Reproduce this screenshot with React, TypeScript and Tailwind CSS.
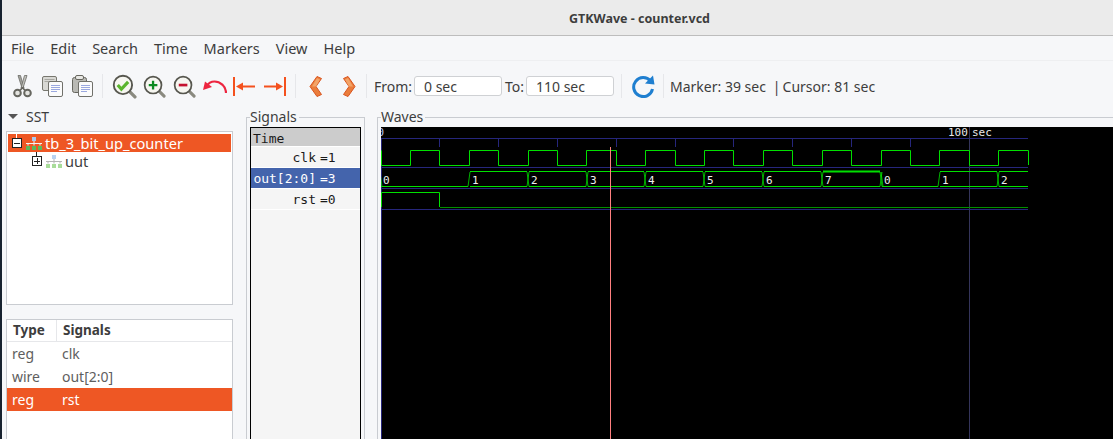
const ui = { fontFamily: '"Noto Sans", sans-serif' };

function Magnifier({ children, size = 23 }: { children: React.ReactNode; size?: number }) {
  return (
    <svg width={size} height={size} viewBox="0 0 24 24">
      <line x1="16" y1="16" x2="22" y2="22" stroke="#8a8a80" strokeWidth="3.2" strokeLinecap="round" />
      <circle cx="10.5" cy="10.5" r="8.8" fill="#f6f6f0" stroke="#56564e" strokeWidth="1.8" />
      {children}
    </svg>
  );
}

function Doc() {
  return (
    <svg width="21" height="22" viewBox="0 0 21 22">
      <rect x="0.500" y="1.500" width="14" height="14" rx="1.500" fill="#d8d8d4" stroke="#77776f" />
      <path d="M2.500 4.500h10M2.500 6.500h10" stroke="#a8a8a2" />
      <rect x="6.500" y="6.500" width="14" height="15" rx="1.500" fill="#fbfbfb" stroke="#70706a" />
      <path d="M9 10.500h9M9 12.500h9M9 14.500h9M9 16.500h6" stroke="#9aa8e0" />
    </svg>
  );
}

function Paste() {
  return (
    <svg width="21" height="22" viewBox="0 0 21 22">
      <rect x="0.500" y="2.500" width="14" height="15" rx="2" fill="#b9b9b4" stroke="#66665f" />
      <rect x="3.500" y="0.500" width="8" height="4" rx="1.500" fill="#e8e8e4" stroke="#66665f" />
      <rect x="6.500" y="6.500" width="14" height="15" rx="1.500" fill="#fbfbfb" stroke="#70706a" />
      <path d="M9 10.500h9M9 12.500h9M9 14.500h9M9 16.500h6" stroke="#9aa8e0" />
    </svg>
  );
}

function Scissors() {
  return (
    <svg width="19" height="23" viewBox="0 0 19 23">
      <path d="M5 0.500L9 13H11L7.500 0.500z" fill="#a6a6a0" stroke="#6a6a64" strokeWidth="0.800" />
      <path d="M14 0.500L10 13H8L11.500 0.500z" fill="#c4c4be" stroke="#6a6a64" strokeWidth="0.800" />
      <circle cx="4.500" cy="18" r="3.300" fill="#e4e4e0" stroke="#66665f" strokeWidth="2" />
      <circle cx="14.500" cy="18" r="3.300" fill="#e4e4e0" stroke="#66665f" strokeWidth="2" />
      <path d="M7 15.500l2.500-3M12 15.500l-2.500-3" stroke="#66665f" strokeWidth="1.800" />
    </svg>
  );
}

function Sep() {
  return <div className="w-px h-[24px] bg-[#e6e7ea]" />;
}

function TreeIcon({ light }: { light?: boolean }) {
  const top = light ? "#b9d2f0" : "#a9c8ee";
  const bottom = light ? "#a9dc9a" : "#5cb85c";
  return (
    <svg width="16" height="13" viewBox="0 0 16 13" className="shrink-0">
      <rect x="6" y="0" width="4" height="4" fill={top} />
      <path d="M8 4v2M0 6.500h16M2 6.500v2M8 6.500v2M14 6.500v2" stroke={light ? "#b5b5b5" : "#f2f2f2"} fill="none" />
      <rect x="0" y="9" width="4" height="4" fill={bottom} />
      <rect x="6" y="9" width="4" height="4" fill={bottom} />
      <rect x="12" y="9" width="4" height="4" fill={bottom} />
    </svg>
  );
}

function Chevron({ flip }: { flip?: boolean }) {
  return (
    <svg width="14" height="21" viewBox="0 0 14 21" style={flip ? { transform: "scaleX(-1)" } : undefined}>
      <path d="M8 0.500L1 10.500L8 20.500L12.500 18.500L7 10.500L12.500 2.500z" fill="#ea7d3c" stroke="#d9541e" strokeLinejoin="round" />
      <path d="M8 2L3 10.500L7 10.500L11 3.500z" fill="#f3a468" />
    </svg>
  );
}

const blue = "#26267c";
const green = "#00e000";
const ticks = [439.5, 498.5, 557.5, 616.5, 675.5, 733.5, 792.5, 851.5, 910.5, 969.5];
const clkEdges = [410.5, 439.5, 469.5, 498.5, 528.5, 557.5, 586.5, 616.5, 645.5, 675.5, 704.5, 733.5, 763.5, 792.5, 822.5, 851.5, 881.5, 910.5, 939.5, 969.5, 998.5];
const outSegs = [
  { x: 381, end: 468, v: "0" },
  { x: 470, end: 527, v: "1" },
  { x: 529, end: 586, v: "2" },
  { x: 588, end: 644, v: "3" },
  { x: 646, end: 703, v: "4" },
  { x: 705, end: 762, v: "5" },
  { x: 764, end: 821, v: "6" },
  { x: 823, end: 880, v: "7" },
  { x: 882, end: 938, v: "0" },
  { x: 940, end: 997, v: "1" },
  { x: 999, end: 1028, v: "2" },
];

function clkPath() {
  let d = "M0.5 150.5V165.5";
  let high = false;
  for (const e of clkEdges) {
    const x = e - 381;
    d += `H${x}V${high ? 165.5 : 150.5}`;
    high = !high;
  }
  return d + "H647.500V165";
}

function Waves() {
  return (
    <svg width="732" height="312" viewBox="0 127 732 312" className="block" style={{ fontFamily: '"DejaVu Sans Mono", monospace' }}>
      <rect x="0" y="127" width="732" height="312" fill="#000" />
      <text x="-3.500" y="136" fontSize="11" fill="#b9c4ee">0</text>
      <text x="567" y="136" fontSize="11" fill="#e8e8e8">100</text>
      <text x="591" y="136" fontSize="11" fill="#e8e8e8">sec</text>
      <path d="M0 138.500H647M0 167.500H647M0 188.500H647M0 209.500H647" stroke={blue} />
      <path d="M0.500 138V439" stroke={blue} />
      {ticks.map((t) => (
        <line key={t} x1={t - 381} x2={t - 381} y1="138" y2="147" stroke={blue} />
      ))}
      <line x1="588.500" x2="588.500" y1="127" y2="439" stroke="#34345a" />
      <path d={clkPath()} fill="none" stroke={green} />
      {outSegs.map((s, i) => {
        const x = s.x - 381;
        const end = s.end - 381;
        const low = s.v === "0";
        return (
          <g key={i}>
            {!low && <line x1={x} x2={end} y1="171.500" y2="171.500" stroke={green} strokeWidth={s.v === "7" ? 2 : 1} />}
            <line x1={x} x2={end} y1="186.500" y2="186.500" stroke={green} />
            {i > 0 && (
              <path
                d={
                  outSegs[i - 1].v === "0"
                    ? `M${x - 2} 186.500L${x} 172`
                    : `M${x - 2} 186.500L${x} 172M${x - 2} 172L${x} 186.500`
                }
                fill="none"
                stroke={green}
                strokeWidth="0.800"
              />
            )}
            {s.v === "0" && (
              <path d={`M${x + 1} 186.500L${x - 1} 172`} fill="none" stroke={green} strokeWidth="0.800" />
            )}
            <text x={x + 2} y="184" fontSize="11" fill="#f0f0f0">{s.v}</text>
          </g>
        );
      })}
      <path d="M0.500 207V192.500H58.500V207" fill="none" stroke={green} />
      <path d="M59 207.500H647" fill="none" stroke="#009000" />
      <line x1="229.500" x2="229.500" y1="147" y2="439" stroke="#ff8080" />
    </svg>
  );
}

function SignalRow({ name, value, active }: { name: string; value: string; active?: boolean }) {
  return (
    <div className={`h-[21px] pt-[2px] border-b border-white flex items-center text-[13px] ${active ? "bg-[#4464ac] text-white" : "text-[#1a1a1a]"}`}>
      <span className="w-[65px] text-right whitespace-pre">{name}</span>
      <span className="ml-[4px]">={value}</span>
    </div>
  );
}

export default function App() {
  return (
    <div className="w-[1113px] h-[439px] overflow-hidden flex bg-[#f6f7f9] text-[#3d3d3d]" style={ui}>
      <div className="w-[2px] bg-[#17222f] shrink-0" />
      <div className="flex-1 flex flex-col min-w-0">
        <div className="h-[36px] bg-[#ebebeb] border-b border-[#bdbdbd] flex items-center pl-[567px] pt-[4px] text-[12.5px] font-bold text-[#3d3d3d] shrink-0">
          GTKWave - counter.vcd
        </div>

        <div className="h-[25px] pt-[2px] border-b border-[#eeeff1] flex items-center pl-[9px] gap-[16px] text-[14.5px] shrink-0">
          <span>File</span>
          <span>Edit</span>
          <span>Search</span>
          <span>Time</span>
          <span>Markers</span>
          <span>View</span>
          <span>Help</span>
        </div>

        <div className="h-[44px] pt-[6px] flex items-center text-[14px] shrink-0 pl-[11px]">
          <Scissors />
          <div className="ml-[10px]"><Doc /></div>
          <div className="ml-[9px]"><Paste /></div>
          <div className="ml-[9px]"><Sep /></div>
          <div className="ml-[9px]">
            <Magnifier size={25}>
              <path d="M5.500 10.500l3.500 4 6.500-7" fill="none" stroke="#5ab52c" strokeWidth="3" />
            </Magnifier>
          </div>
          <div className="ml-[6px]">
            <Magnifier>
              <path d="M6 10.500h9M10.500 6v9" stroke="#0b8a1f" strokeWidth="2.400" />
            </Magnifier>
          </div>
          <div className="ml-[7px]">
            <Magnifier>
              <path d="M6 10.500h9" stroke="#c4122f" strokeWidth="2.800" />
            </Magnifier>
          </div>
          <svg width="25" height="16" viewBox="0 0 25 16" className="ml-[6px]">
            <path d="M24 15C24 8 18 3.500 12.500 3.500C9 3.500 6.500 5 5 8" fill="none" stroke="#ed2540" strokeWidth="2.200" />
            <path d="M1 12L3 3.500L10 9z" fill="#ed2540" />
          </svg>
          <svg width="23" height="19" viewBox="0 0 23 19" className="ml-[6px]">
            <path d="M1 0v19" stroke="#f4511e" strokeWidth="2" />
            <path d="M22 9.500H8" stroke="#f4511e" strokeWidth="2" />
            <path d="M3 9.500L10 5.500v8z" fill="#f4511e" />
          </svg>
          <svg width="23" height="19" viewBox="0 0 23 19" className="ml-[7px]">
            <path d="M22 0v19" stroke="#f4511e" strokeWidth="2" />
            <path d="M1 9.500H15" stroke="#f4511e" strokeWidth="2" />
            <path d="M20 9.500L13 5.500v8z" fill="#f4511e" />
          </svg>
          <div className="ml-[9px]"><Sep /></div>
          <div className="ml-[13px]"><Chevron /></div>
          <div className="ml-[19px]"><Chevron flip /></div>
          <div className="ml-[10px]"><Sep /></div>
          <span className="ml-[7px] w-[40px]">From:</span>
          <div className="w-[88px] h-[20px] bg-white border border-[#cfd1d4] rounded-[3px] flex items-center pl-[9px]">0 sec</div>
          <span className="ml-[3px] w-[21px]">To:</span>
          <div className="w-[88px] h-[20px] bg-white border border-[#cfd1d4] rounded-[3px] flex items-center pl-[9px]">110 sec</div>
          <div className="ml-[7px]"><Sep /></div>
          <svg width="24" height="24" viewBox="0 0 24 24" className="ml-[10px]">
            <path d="M18.500 7A9.500 9.500 0 1 0 20.500 15" fill="none" stroke="#1f7fd0" strokeWidth="3" />
            <path d="M13 9.500L22.500 10.500L21 1.500z" fill="#1f7fd0" />
          </svg>
          <div className="ml-[7px]"><Sep /></div>
          <span className="ml-[6px]">Marker: 39 sec</span>
          <span className="ml-[7px] mr-[2px]">|</span>
          <span>Cursor: 81 sec</span>
        </div>

        <div className="flex-1 flex min-h-0">
          <div className="w-[244px] pl-[4px] pr-[13px] flex flex-col shrink-0 text-[14px]">
            <div className="h-[26px] pb-[4px] flex items-center pl-[2px] gap-[6px] shrink-0">
              <span className="w-0 h-0 border-x-[5px] border-x-transparent border-t-[5px] border-t-[#555]" />
              <span className="ml-[2px]">SST</span>
            </div>
            <div className="h-[174px] bg-white border border-[#c9ccd1] pt-[2px] px-[1px] shrink-0">
              <div className="h-[18px] bg-[#ee5724] text-white flex items-center pl-[4px] relative">
                <span className="absolute left-[8px] -top-[2px] w-px h-[6px] bg-white" />
                <span className="w-[10px] h-[10px] border border-[#222] bg-white flex items-center justify-center relative shrink-0">
                  <span className="w-[6px] h-px bg-[#222]" />
                </span>
                <span className="ml-[4px]"><TreeIcon /></span>
                <span className="ml-[3px] leading-none text-[14.6px]">tb_3_bit_up_counter</span>
              </div>
              <div className="h-[18px] flex items-center pl-[24px] relative">
                <span className="absolute left-[28px] top-0 w-px h-[6px] bg-[#222]" />
                <span className="w-[10px] h-[10px] border border-[#222] bg-white flex items-center justify-center relative shrink-0">
                  <span className="w-[6px] h-px bg-[#222]" />
                  <span className="absolute w-px h-[6px] bg-[#222]" />
                </span>
                <span className="ml-[4px]"><TreeIcon light /></span>
                <span className="ml-[3px] leading-none text-[14.6px]">uut</span>
              </div>
            </div>
            <div className="mt-[14px] flex-1 bg-white border border-[#c9ccd1] border-b-0 min-h-0">
              <div className="h-[22px] flex items-center border-b border-[#e6e7ea] font-bold text-[13.5px]">
                <span className="w-[50px] pl-[6px] border-r border-[#e6e7ea] h-full flex items-center">Type</span>
                <span className="pl-[6px]">Signals</span>
              </div>
              {[
                ["reg", "clk", false],
                ["wire", "out[2:0]", false],
                ["reg", "rst", true],
              ].map(([type, name, active]) => (
                <div key={name as string} className={`h-[23px] flex items-center ${active ? "bg-[#ee5724] text-white" : "text-[#5e5e5e]"}`}>
                  <span className="w-[55px] pl-[5px]">{type}</span>
                  <span>{name}</span>
                </div>
              ))}
            </div>
          </div>

          <div className="w-[119px] mt-[12px] border border-b-0 border-[#c9ccd1] px-[3px] pt-[9px] relative shrink-0">
            <span className="absolute left-[3px] -top-[11px] bg-[#f6f7f9] pr-[2px] text-[14px] leading-[20px]">Signals</span>
            <div className="h-full border border-b-0 border-black bg-[#f5f5f5]" style={{ fontFamily: '"DejaVu Sans Mono", monospace' }}>
              <div className="h-[19px] pt-[3px] bg-[#cccccc] border-b border-white flex items-center pl-[2px] text-[13px] text-[#1a1a1a]">Time</div>
              <SignalRow name="clk" value="1" />
              <SignalRow name="out[2:0]" value="3" active />
              <SignalRow name="rst" value="0" />
            </div>
          </div>

          <div className="ml-[12px] flex-1 mt-[12px] border-t border-l border-[#c9ccd1] pl-[3px] pt-[9px] relative min-w-0">
            <span className="absolute left-[3px] -top-[11px] bg-[#f6f7f9] pr-[2px] text-[14px] leading-[20px]">Waves</span>
            <Waves />
          </div>
        </div>
      </div>
    </div>
  );
}
